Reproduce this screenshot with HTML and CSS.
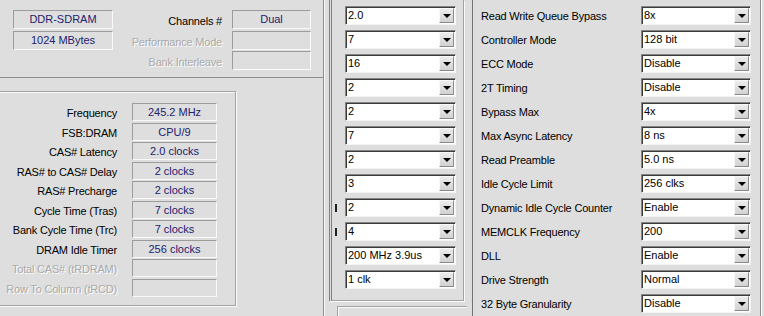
FILE: index.html
```html
<!DOCTYPE html>
<html lang="en">
<head>
  <meta charset="UTF-8">
  <title>Memory Timings</title>
  <link rel="stylesheet" href="styles.css">
</head>
<body>
  <div class="window">
    <div class="col-left">
      <div class="info-panel">
        <div class="info-grid">
          <div class="value-box">DDR-SDRAM</div>
          <div class="label">Channels #</div>
          <div class="value-box">Dual</div>

          <div class="value-box">1024 MBytes</div>
          <div class="label disabled">Performance Mode</div>
          <div class="value-box"></div>

          <div></div>
          <div class="label disabled">Bank Interleave</div>
          <div class="value-box"></div>
        </div>
      </div>

      <div class="timing-panel">
        <div class="timing-group">
          <div class="label">Frequency</div><div class="value-box">245.2 MHz</div>
          <div class="label">FSB:DRAM</div><div class="value-box">CPU/9</div>
          <div class="label">CAS# Latency</div><div class="value-box">2.0 clocks</div>
          <div class="label">RAS# to CAS# Delay</div><div class="value-box">2 clocks</div>
          <div class="label">RAS# Precharge</div><div class="value-box">2 clocks</div>
          <div class="label">Cycle Time (Tras)</div><div class="value-box">7 clocks</div>
          <div class="label">Bank Cycle Time (Trc)</div><div class="value-box">7 clocks</div>
          <div class="label">DRAM Idle Timer</div><div class="value-box">256 clocks</div>
          <div class="label disabled">Total CAS# (tRDRAM)</div><div class="value-box"></div>
          <div class="label disabled">Row To Column (tRCD)</div><div class="value-box"></div>
        </div>
      </div>
    </div>

    <div class="col-mid">
      <div class="combo-group">
        <div class="combo-row"><span class="tick"></span><div class="combo"><span class="combo-text">2.0</span><span class="combo-btn"></span></div></div>
        <div class="combo-row"><span class="tick"></span><div class="combo"><span class="combo-text">7</span><span class="combo-btn"></span></div></div>
        <div class="combo-row"><span class="tick"></span><div class="combo"><span class="combo-text">16</span><span class="combo-btn"></span></div></div>
        <div class="combo-row"><span class="tick"></span><div class="combo"><span class="combo-text">2</span><span class="combo-btn"></span></div></div>
        <div class="combo-row"><span class="tick"></span><div class="combo"><span class="combo-text">2</span><span class="combo-btn"></span></div></div>
        <div class="combo-row"><span class="tick"></span><div class="combo"><span class="combo-text">7</span><span class="combo-btn"></span></div></div>
        <div class="combo-row"><span class="tick"></span><div class="combo"><span class="combo-text">2</span><span class="combo-btn"></span></div></div>
        <div class="combo-row"><span class="tick"></span><div class="combo"><span class="combo-text">3</span><span class="combo-btn"></span></div></div>
        <div class="combo-row"><span class="tick mark"></span><div class="combo"><span class="combo-text">2</span><span class="combo-btn"></span></div></div>
        <div class="combo-row"><span class="tick mark"></span><div class="combo"><span class="combo-text">4</span><span class="combo-btn"></span></div></div>
        <div class="combo-row"><span class="tick"></span><div class="combo"><span class="combo-text">200 MHz 3.9us</span><span class="combo-btn"></span></div></div>
        <div class="combo-row"><span class="tick"></span><div class="combo"><span class="combo-text">1 clk</span><span class="combo-btn"></span></div></div>
      </div>
      <div class="mid-bottom"></div>
    </div>

    <div class="col-right">
      <div class="setting-group">
        <div class="setting-row"><span class="label">Read Write Queue Bypass</span><div class="combo wide"><span class="combo-text">8x</span><span class="combo-btn"></span></div></div>
        <div class="setting-row"><span class="label">Controller Mode</span><div class="combo wide"><span class="combo-text">128 bit</span><span class="combo-btn"></span></div></div>
        <div class="setting-row"><span class="label">ECC Mode</span><div class="combo wide"><span class="combo-text">Disable</span><span class="combo-btn"></span></div></div>
        <div class="setting-row"><span class="label">2T Timing</span><div class="combo wide"><span class="combo-text">Disable</span><span class="combo-btn"></span></div></div>
        <div class="setting-row"><span class="label">Bypass Max</span><div class="combo wide"><span class="combo-text">4x</span><span class="combo-btn"></span></div></div>
        <div class="setting-row"><span class="label">Max Async Latency</span><div class="combo wide"><span class="combo-text">8 ns</span><span class="combo-btn"></span></div></div>
        <div class="setting-row"><span class="label">Read Preamble</span><div class="combo wide"><span class="combo-text">5.0 ns</span><span class="combo-btn"></span></div></div>
        <div class="setting-row"><span class="label">Idle Cycle Limit</span><div class="combo wide"><span class="combo-text">256 clks</span><span class="combo-btn"></span></div></div>
        <div class="setting-row"><span class="label">Dynamic Idle Cycle Counter</span><div class="combo wide"><span class="combo-text">Enable</span><span class="combo-btn"></span></div></div>
        <div class="setting-row"><span class="label">MEMCLK Frequency</span><div class="combo wide"><span class="combo-text">200</span><span class="combo-btn"></span></div></div>
        <div class="setting-row"><span class="label">DLL</span><div class="combo wide"><span class="combo-text">Enable</span><span class="combo-btn"></span></div></div>
        <div class="setting-row"><span class="label">Drive Strength</span><div class="combo wide"><span class="combo-text">Normal</span><span class="combo-btn"></span></div></div>
        <div class="setting-row"><span class="label">32 Byte Granularity</span><div class="combo wide"><span class="combo-text">Disable</span><span class="combo-btn"></span></div></div>
      </div>
    </div>
  </div>
</body>
</html>
```

FILE: styles.css
```css
body {
  margin: 0;
  padding: 0;
  background-color: #dedede;
  font-family: "Liberation Sans", Arial, sans-serif;
  font-size: 11px;
  color: #000;
  overflow: hidden;
}
.window {
  display: flex;
  width: 764px;
  height: 316px;
  overflow: hidden;
}
.label {
  letter-spacing: -0.2px;
  white-space: nowrap;
}
.label.disabled {
  color: #a9a9a9;
  text-shadow: 1px 1px 0 #fff;
}
.value-box {
  box-sizing: border-box;
  height: 19px;
  line-height: 17px;
  text-align: center;
  color: #22226e;
  border: 1px solid;
  border-color: #9c9c9c #fafafa #fafafa #9c9c9c;
}

/* left column */
.col-left {
  width: 324px;
  flex-shrink: 0;
  display: flex;
  flex-direction: column;
}
.info-panel {
  box-sizing: border-box;
  height: 78px;
  border-right: 1px solid #8e8e8e;
  border-bottom: 1px solid #8e8e8e;
  padding: 10px 12px 0 13px;
}
.info-grid {
  display: grid;
  grid-template-columns: 100px 1fr 79px;
  grid-auto-rows: 19px;
  row-gap: 1.5px;
}
.info-grid .label {
  text-align: right;
  padding-right: 10px;
  line-height: 22px;
}
.timing-panel {
  flex: 1;
  border-right: 1px solid #8e8e8e;
  padding-top: 13px;
}
.timing-group {
  box-sizing: border-box;
  width: 238px;
  height: 215px;
  margin-left: -2px;
  border: 1px solid #a2a2a2;
  box-shadow: inset 1px 1px 0 #fafafa, 1px 1px 0 #fafafa;
  padding: 11px 0 0 2px;
  display: grid;
  grid-template-columns: 116px 85px;
  grid-auto-rows: 18px;
  column-gap: 15px;
  row-gap: 1.5px;
}
.timing-group .label {
  text-align: right;
  line-height: 20px;
}
.timing-group .value-box {
  height: 18px;
  line-height: 16px;
}

/* middle column */
.col-mid {
  width: 148px;
  flex-shrink: 0;
  box-sizing: border-box;
  border-left: 1px solid #fafafa;
  padding-left: 4px;
  display: flex;
  flex-direction: column;
}
.combo-group {
  box-sizing: border-box;
  width: 135px;
  height: 301px;
  border-left: 3px double #808080;
  border-right: 1px solid #a2a2a2;
  border-bottom: 1px solid #a2a2a2;
  box-shadow: 1px 1px 0 #fafafa;
  padding: 6px 0 0 3px;
  display: flex;
  flex-direction: column;
  gap: 5px;
}
.combo-row {
  display: flex;
  align-items: center;
  height: 19px;
}
.tick {
  width: 2px;
  height: 8px;
  margin-right: 8px;
}
.tick.mark {
  background-color: #202020;
}
.mid-bottom {
  margin: 5px 5px 0 8px;
  flex: 1;
  border-top: 1px solid #a2a2a2;
  border-left: 1px solid #a2a2a2;
  box-shadow: inset 1px 1px 0 #fafafa;
}

/* combo boxes */
.combo {
  box-sizing: border-box;
  display: flex;
  width: 111px;
  height: 19px;
  background: #fff;
  border: 1px solid;
  border-color: #858585 #f4f4f4 #f4f4f4 #858585;
  box-shadow: inset 1px 1px 0 #3a3a3a;
}
.combo.wide {
  width: 110px;
}
.combo-text {
  flex: 1;
  padding-left: 2px;
  line-height: 17px;
  white-space: nowrap;
  overflow: hidden;
}
.combo-btn {
  box-sizing: border-box;
  width: 15px;
  margin: 1px 1px 1px 0;
  background: linear-gradient(#ececec, #d2d2d2);
  border: 1px solid;
  border-color: #f8f8f8 #8a8a8a #8a8a8a #f8f8f8;
  display: flex;
  align-items: center;
  justify-content: center;
}
.combo-btn::after {
  content: "";
  border-left: 4px solid transparent;
  border-right: 4px solid transparent;
  border-top: 4px solid #000;
  margin-top: 1px;
}

/* right column */
.col-right {
  flex: 1;
  border-left: 1px solid #727272;
  padding-left: 8px;
  display: flex;
}
.setting-group {
  box-sizing: border-box;
  width: 280px;
  border-right: 1px solid #8e8e8e;
  box-shadow: 1px 0 0 #fafafa;
  padding-top: 6px;
  display: flex;
  flex-direction: column;
  gap: 5px;
}
.setting-row {
  display: flex;
  align-items: center;
  height: 19px;
}
.setting-row .label {
  width: 160px;
  line-height: 20px;
}
```
